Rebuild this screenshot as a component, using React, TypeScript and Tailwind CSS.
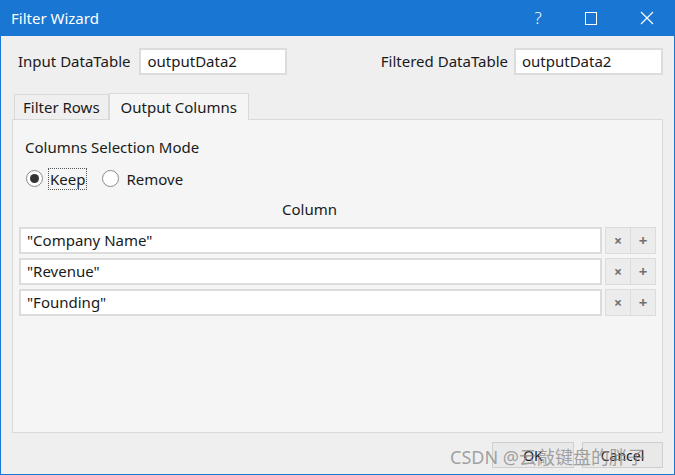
import React from "react";

const rows = ['"Company Name"', '"Revenue"', '"Founding"'];

function Field({ value, className = "" }: { value: string; className?: string }) {
  return (
    <div
      className={`h-[27px] border-2 border-[#dcdcdc] bg-white flex items-center px-[6px] text-[15px] text-[#1a1a1a] ${className}`}
    >
      {value}
    </div>
  );
}

function Radio({ checked, label, focus }: { checked?: boolean; label: string; focus?: boolean }) {
  return (
    <div className="flex items-center gap-[6px]">
      <span className="w-[17px] h-[17px] rounded-full border border-[#8a8a8a] bg-white flex items-center justify-center">
        {checked && <span className="w-[9px] h-[9px] rounded-full bg-[#333]" />}
      </span>
      <span
        className={`px-[1px] leading-[20px] ${focus ? "outline outline-1 outline-dotted outline-[#555]" : ""}`}
      >
        {label}
      </span>
    </div>
  );
}

export default function App() {
  return (
    <div
      className="w-[675px] h-[475px] flex flex-col bg-[#efefef] text-[#1a1a1a] relative overflow-hidden"
      style={{ fontFamily: '"Noto Sans", "Noto Sans CJK SC", sans-serif' }}
    >
      {/* title bar */}
      <div className="h-[36px] bg-[#1976d2] flex items-center text-white shrink-0">
        <span className="pl-[11px] text-[15px] flex-1">Filter Wizard</span>
        <span className="w-[50px] text-center text-[17px] font-light">?</span>
        <span className="w-[56px] flex justify-center">
          <span className="w-[12px] h-[13px] border border-white" />
        </span>
        <span className="w-[56px] flex justify-center">
          <svg width="14" height="14" viewBox="0 0 14 14">
            <path d="M1 1L13 13M13 1L1 13" stroke="white" strokeWidth="1.2" />
          </svg>
        </span>
      </div>

      <div className="flex-1 flex flex-col border-x border-b border-[#1976d2] px-[11px] text-[15px]">
        {/* table names */}
        <div className="flex items-center justify-between pt-[12px] pl-[6px]">
          <div className="flex items-center gap-[9px]">
            <span>Input DataTable</span>
            <Field value="outputData2" className="w-[148px]" />
          </div>
          <div className="flex items-center gap-[6px]">
            <span>Filtered DataTable</span>
            <Field value="outputData2" className="w-[149px]" />
          </div>
        </div>

        {/* tabs */}
        <div className="flex items-end pl-[2px] mt-[17px] h-[27px]">
          <div className="h-[25px] px-[8px] border border-b-0 border-[#d9d9d9] bg-[#efefef] flex items-center text-[15px]">
            Filter Rows
          </div>
          <div className="h-[27px] px-[11px] border border-b-0 border-[#d9d9d9] bg-[#f4f5f4] flex items-center -mb-px relative z-10">
            Output Columns
          </div>
        </div>

        <div className="h-[314px] border border-[#d9d9d9] bg-[#f4f5f4] flex flex-col px-[6px]">
          <div className="pl-[6px] pt-[16px]">Columns Selection Mode</div>
          <div className="flex items-center gap-[16px] pl-[7px] mt-[10px]">
            <Radio checked label="Keep" focus />
            <Radio label="Remove" />
          </div>
          <div className="text-center mt-[9px] pr-[56px]">Column</div>
          <div className="flex flex-col gap-[4px] mt-[7px]">
            {rows.map((r) => (
              <div key={r} className="flex items-center">
                <Field value={r} className="flex-1" />
                <div className="flex ml-[3px]">
                  <span className="w-[26px] h-[27px] border border-[#dcdcdc] bg-[#ececec] flex items-center justify-center text-[14px] font-bold text-[#707070]">
                    ×
                  </span>
                  <span className="w-[25px] h-[27px] border border-l-0 border-[#dcdcdc] bg-[#ececec] flex items-center justify-center text-[15px] font-bold text-[#707070]">
                    +
                  </span>
                </div>
              </div>
            ))}
          </div>
        </div>

        {/* buttons */}
        <div className="flex justify-end gap-[8px] mt-[9px]">
          <button className="w-[82px] h-[26px] border border-[#cfcfcf] bg-[#e9e9e9] text-[14px]">OK</button>
          <button className="w-[81px] h-[26px] border border-[#cfcfcf] bg-[#e9e9e9] text-[14px]">Cancel</button>
        </div>
      </div>

      {/* watermark */}
      <div className="absolute left-[450px] top-[444px] text-[18px] text-[#8c8c8c]/80 pointer-events-none whitespace-nowrap">
        CSDN @云敲键盘的胖子
      </div>
    </div>
  );
}
